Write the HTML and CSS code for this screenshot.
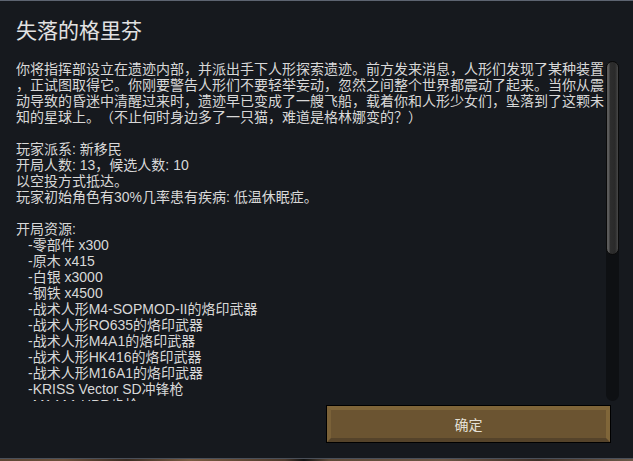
FILE: index.html
```
<!DOCTYPE html>
<html lang="zh-CN">
<head>
<meta charset="utf-8">
<title>失落的格里芬</title>
<link rel="stylesheet" href="styles.css">
</head>
<body>
<div class="window">
  <h1 class="title">失落的格里芬</h1>
  <div class="scroll">
    <div class="content">
      <p class="para">你将指挥部设立在遗迹内部，并派出手下人形探索遗迹。前方发来消息，人形们发现了某种装置<br>，正试图取得它。你刚要警告人形们不要轻举妄动，忽然之间整个世界都震动了起来。当你从震<br>动导致的昏迷中清醒过来时，遗迹早已变成了一艘飞船，载着你和人形少女们，坠落到了这颗未<br>知的星球上。（不止何时身边多了一只猫，难道是格林娜变的？）</p>
      <p class="para">玩家派系: 新移民<br>开局人数: 13，候选人数: 10<br>以空投方式抵达。<br>玩家初始角色有30%几率患有疾病: 低温休眠症。</p>
      <p class="para">开局资源:</p>
      <ul class="list">
        <li>-零部件 x300</li>
        <li>-原木 x415</li>
        <li>-白银 x3000</li>
        <li>-钢铁 x4500</li>
        <li>-战术人形M4-SOPMOD-II的烙印武器</li>
        <li>-战术人形RO635的烙印武器</li>
        <li>-战术人形M4A1的烙印武器</li>
        <li>-战术人形HK416的烙印武器</li>
        <li>-战术人形M16A1的烙印武器</li>
        <li>-KRISS Vector SD冲锋枪</li>
        <li>-M14A1 HPR步枪</li>
        <li>-M1911手枪</li>
      </ul>
    </div>
    <div class="scrollbar"><div class="thumb"></div></div>
  </div>
  <div class="footer">
    <button class="btn">确定</button>
  </div>
</div>
<div class="strip"></div>
</body>
</html>
```
FILE: styles.css
```
html, body {
  margin: 0;
  padding: 0;
  background: #16191e;
}
body {
  width: 633px;
  height: 461px;
  overflow: hidden;
  font-family: "Liberation Sans", "Noto Sans CJK SC", sans-serif;
  color: #d8d8d8;
  text-spacing-trim: space-all;
}
.window {
  box-sizing: border-box;
  height: 459px;
  border-top: 1px solid #5d6471;
  border-bottom: 1px solid #4a505a;
  display: flex;
  flex-direction: column;
  padding: 0 14px 0 16px;
}
.title {
  margin: 16px 0 0 0;
  font-size: 21px;
  line-height: 28px;
  font-weight: normal;
  color: #e2e2e2;
}
.scroll {
  margin-top: 16px;
  height: 340px;
  display: flex;
  gap: 2px;
}
.content {
  flex: 1;
  overflow: hidden;
  font-size: 14px;
  line-height: 16px;
  white-space: nowrap;
}
.para {
  margin: 0 0 16px 0;
}
.para + .para + .para {
  margin-bottom: 0;
}
.list {
  list-style: none;
  margin: 0;
  padding: 0 0 0 12px;
}
.scrollbar {
  width: 13px;
  background: #0e1013;
  border-radius: 7px;
  display: flex;
  flex-direction: column;
}
.thumb {
  height: 194px;
  box-sizing: border-box;
  border: 1px solid #0b0b0b;
  border-radius: 7px;
  background: linear-gradient(to right, #5a5a5a 0, #5a5a5a 2px, #2e2e2e 3px, #2a2a2a 8px, #3c3c3c 10px, #4a4a4a 11px);
}
.footer {
  display: flex;
  justify-content: flex-end;
  padding-top: 5px;
  padding-right: 9px;
}
.btn {
  width: 283px;
  height: 36px;
  box-sizing: border-box;
  padding: 0;
  outline: 1px solid #000;
  outline-offset: 0;
  border-style: solid;
  border-width: 4px 4px 4px 4px;
  border-color: #7f6539 #806639 #55432a #7a6138;
  background: #6b5431;
  font-family: "Liberation Sans", "Noto Sans CJK SC", sans-serif;
  font-size: 14px;
  color: #e4e0d6;
  cursor: pointer;
}
.strip {
  height: 2px;
  background: linear-gradient(to right, #5c4634 0, #6b503a 10%, #3a2c22 20%, #7a5c42 30%, #4d3a2c 45%, #111 48%, #5e4a38 52%, #6a5544 70%, #3e3028 85%, #6c5a4a 100%);
}
```
